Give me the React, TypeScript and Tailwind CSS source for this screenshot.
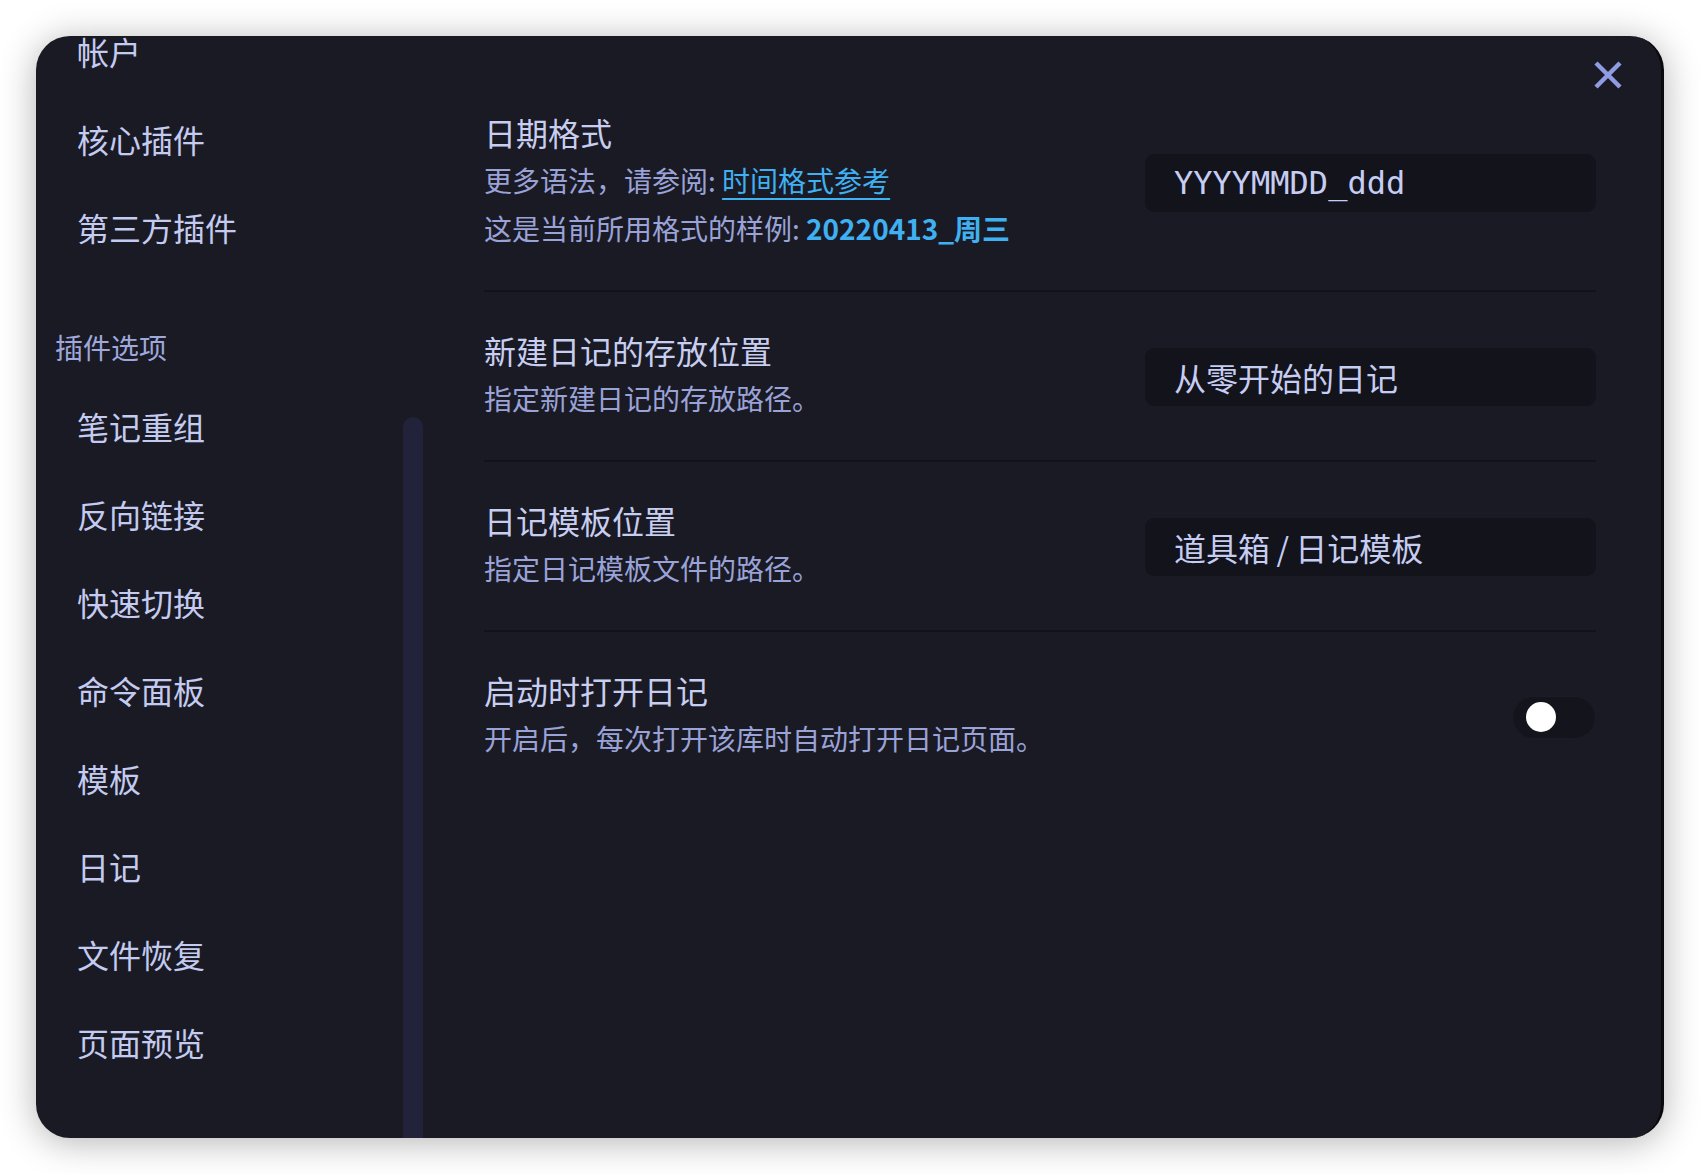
const coreItems = ["帐户", "核心插件", "第三方插件"];
const pluginItems = ["笔记重组", "反向链接", "快速切换", "命令面板", "模板", "日记", "文件恢复", "页面预览"];

function NavItem(props: { label: string }) {
  return (
    <div className="h-[88px] flex items-center pl-[41px] text-[32px] leading-none text-[#c4cbf0]">
      {props.label}
    </div>
  );
}

function TextBox(props: { value: string; mono?: boolean }) {
  return (
    <div
      className={
        props.mono
          ? "mt-[6px] w-[451px] h-[58px] shrink-0 rounded-[9px] bg-[#13131b] pl-[29px] flex items-center text-[32px] text-[#c6cdf2] font-['DejaVu_Sans_Mono',monospace]"
          : "mt-[6px] w-[451px] h-[58px] shrink-0 rounded-[9px] bg-[#13131b] pl-[29px] flex items-center text-[32px] text-[#c6cdf2]"
      }
    >
      {props.value}
    </div>
  );
}

function Toggle() {
  return (
    <div className="mt-[6px] w-[84px] h-[43px] shrink-0 rounded-full bg-[#14141c] border border-[#1c1c26] flex items-center pl-[13px]">
      <div className="w-[30px] h-[30px] rounded-full bg-white" />
    </div>
  );
}

export default function App() {
  return (
    <div className="w-[1700px] h-[1174px] bg-white p-[36px] font-['Noto_Sans_CJK_SC',sans-serif]">
      <div className="relative w-[1628px] h-[1102px] rounded-[34px] bg-[#1a1a24] border-r-[3px] border-r-[#0a0a0d] overflow-hidden flex shadow-[0_4px_36px_rgba(0,0,0,0.3)]">
        {/* sidebar */}
        <div className="w-[387px] shrink-0 flex">
          <div className="flex-1 -mt-[29px]">
            {coreItems.map((label) => (
              <NavItem key={label} label={label} />
            ))}
            <div className="mt-[41px] h-[70px] flex items-center pl-[19px] text-[28px] leading-none text-[#9fa8dc]">
              插件选项
            </div>
            {pluginItems.map((label) => (
              <NavItem key={label} label={label} />
            ))}
          </div>
          <div className="w-[20px] flex flex-col pt-[381px]">
            <div className="flex-1 rounded-t-full bg-[#22233a]" />
          </div>
        </div>

        {/* settings */}
        <div className="flex-1 pl-[61px] pr-[65px] pt-[72px]">
          <div className="flex items-center justify-between pb-[38px] border-b-2 border-[#121219]">
            <div>
              <div className="text-[32px] leading-[48px] text-[#c8cef0]">日期格式</div>
              <div className="text-[28px] leading-[48px] text-[#9aa3d8]">
                更多语法，请参阅:{" "}
                <span className="text-[#3fb1f2] underline underline-offset-[6px] decoration-2">时间格式参考</span>
              </div>
              <div className="text-[28px] leading-[48px] text-[#9aa3d8]">
                这是当前所用格式的样例: <span className="font-bold text-[#3fb1f2]">20220413_周三</span>
              </div>
            </div>
            <TextBox value="YYYYMMDD_ddd" mono />
          </div>

          <div className="flex items-center justify-between pt-[34px] pb-[38px] border-b-2 border-[#121219]">
            <div>
              <div className="text-[32px] leading-[48px] text-[#c8cef0]">新建日记的存放位置</div>
              <div className="text-[28px] leading-[48px] text-[#9aa3d8]">指定新建日记的存放路径。</div>
            </div>
            <TextBox value="从零开始的日记" />
          </div>

          <div className="flex items-center justify-between pt-[34px] pb-[38px] border-b-2 border-[#121219]">
            <div>
              <div className="text-[32px] leading-[48px] text-[#c8cef0]">日记模板位置</div>
              <div className="text-[28px] leading-[48px] text-[#9aa3d8]">指定日记模板文件的路径。</div>
            </div>
            <TextBox value={"道具箱\u2009/\u2009日记模板"} />
          </div>

          <div className="flex items-center justify-between pt-[34px]">
            <div>
              <div className="text-[32px] leading-[48px] text-[#c8cef0]">启动时打开日记</div>
              <div className="text-[28px] leading-[48px] text-[#9aa3d8]">开启后，每次打开该库时自动打开日记页面。</div>
            </div>
            <Toggle />
          </div>
        </div>

        <button className="absolute top-[25px] right-[39px] text-[#8f9ce3]">
          <svg width="28" height="28" viewBox="0 0 28 28" fill="none" stroke="currentColor" strokeWidth="4.5">
            <path d="M2 2 L26 26 M26 2 L2 26" />
          </svg>
        </button>
      </div>
    </div>
  );
}
